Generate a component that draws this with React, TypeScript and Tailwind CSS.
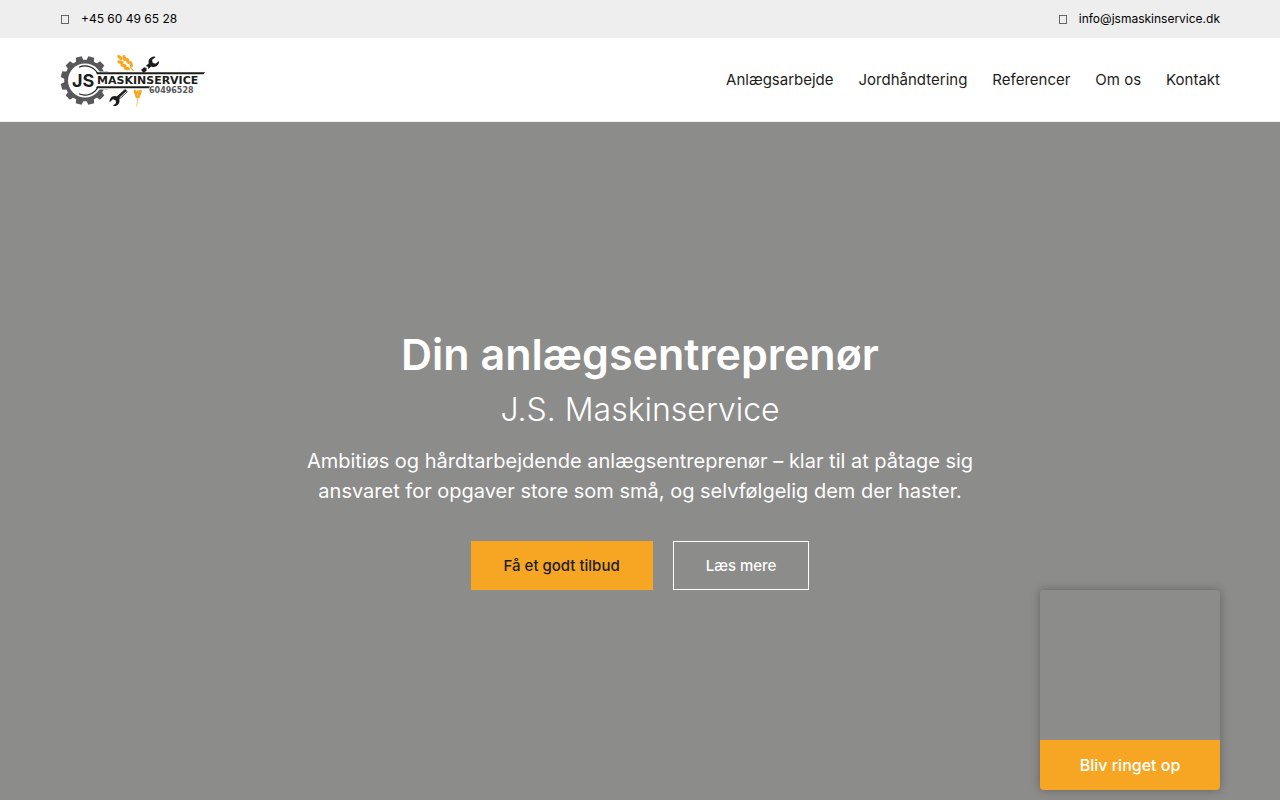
const navItems = [
  { label: "Anlægsarbejde", href: "#anlaegsarbejde" },
  { label: "Jordhåndtering", href: "#jordhaandtering" },
  { label: "Referencer", href: "#referencer" },
  { label: "Om os", href: "#om-os" },
  { label: "Kontakt", href: "#kontakt" },
];

const toothAngles = [15, 45, 75, 105, 135, 165, 195, 225, 255, 285, 315, 345];

function Wrench() {
  return (
    <path d="M-2 12V0C-4.6-1.2-5.6-3.6-5-6.2-4.7-7.6-3.8-8.8-2.6-9.5V-5L0-3.4 2.6-5V-9.5C3.8-8.8 4.7-7.6 5-6.2 5.6-3.6 4.6-1.2 2 0V12Z" />
  );
}

function Grain() {
  return (
    <g fill="#f7a823">
      <ellipse cx="0" cy="-8.5" rx="1.7" ry="3.2" />
      <ellipse cx="-2.8" cy="-5" rx="1.7" ry="3.2" transform="rotate(-32 -2.8 -5)" />
      <ellipse cx="2.8" cy="-5" rx="1.7" ry="3.2" transform="rotate(32 2.8 -5)" />
      <ellipse cx="-3.1" cy="-.5" rx="1.7" ry="3.2" transform="rotate(-32 -3.1 -.5)" />
      <ellipse cx="3.1" cy="-.5" rx="1.7" ry="3.2" transform="rotate(32 3.1 -.5)" />
      <ellipse cx="-3.1" cy="4" rx="1.7" ry="3.2" transform="rotate(-32 -3.1 4)" />
      <ellipse cx="3.1" cy="4" rx="1.7" ry="3.2" transform="rotate(32 3.1 4)" />
      <path d="M-.5 5H.5V11H-.5Z" />
    </g>
  );
}

function Logo() {
  return (
    <svg
      width="146"
      height="54"
      viewBox="60 52 146 54"
      role="img"
      aria-label="JS Maskinservice 60496528"
    >
      <g fill="#58585b">
        {toothAngles.map((angle) => (
          <path
            key={angle}
            d="M81 60.5L82 55.2H88L89 60.5Z"
            transform={`rotate(${angle} 85 79.5)`}
          />
        ))}
        <circle cx="85" cy="79.5" r="20.8" />
      </g>
      <circle cx="85" cy="79.5" r="17" fill="#fff" />
      <path d="M97 70.5H112V88.5H97Z" fill="#fff" />
      <path
        d="M79 66.2A14.5 14.5 0 0 1 98 73M98 86A14.5 14.5 0 0 1 79 92.8"
        fill="none"
        stroke="#1d1d1b"
        strokeWidth="1.2"
      />
      <path d="M96 71.3H205L203.6 73.3H97Z" fill="#1d1d1b" />
      <path d="M97 85.3H150L149 87.3H96Z" fill="#1d1d1b" />

      <g transform="translate(126 62.5) rotate(-46)">
        <Grain />
      </g>
      <g fill="#1d1d1b">
        <g transform="translate(150 64) rotate(50)">
          <path d="M-2 10V6L0 4.6 2 6V10Z" />
          <path d="M-2 4V0C-4.6-1.2-5.6-3.6-5-6.2-4.7-7.6-3.8-8.8-2.6-9.5V-5L0-3.4 2.6-5V-9.5C3.8-8.8 4.7-7.6 5-6.2 5.6-3.6 4.6-1.2 2 0V4L0 2.6Z" />
        </g>
        <g transform="translate(118 97) rotate(228) scale(.95)">
          <Wrench />
        </g>
      </g>
      <path d="M119.5 97L126.5 90.5" stroke="#fff" strokeWidth="1" />
      <g fill="#f7a823">
        <ellipse cx="135.4" cy="91.5" rx="1.6" ry="2.8" transform="rotate(-20 135.4 91.5)" />
        <ellipse cx="140" cy="91.5" rx="1.6" ry="2.8" transform="rotate(20 140 91.5)" />
        <ellipse cx="137.7" cy="91.3" rx="1.3" ry="2.4" />
        <ellipse cx="136.5" cy="95" rx="1.4" ry="2.2" transform="rotate(-20 136.5 95)" />
        <ellipse cx="138.9" cy="95" rx="1.4" ry="2.2" transform="rotate(20 138.9 95)" />
        <path d="M137.4 97H138.2L137 105.5H136.4Z" />
      </g>

      <text
        x="72"
        y="86"
        fill="#1d1d1b"
        className="font-['Inter',sans-serif] text-[18px] font-bold"
      >
        JS
      </text>
      <text
        x="97"
        y="83"
        fill="#1d1d1b"
        className="font-['DejaVu_Sans',sans-serif] text-[11px] font-bold"
      >
        MASKINSERVICE
      </text>
      <text
        x="149"
        y="92"
        fill="#58585b"
        className="font-['DejaVu_Sans',sans-serif] text-[8px] font-bold"
      >
        60496528
      </text>
    </svg>
  );
}

function TopBar() {
  return (
    <div className="flex h-[38px] items-center justify-between bg-[#eeeeee] px-[60px] text-xs text-black">
      <a href="tel:+4560496528" className="flex items-center gap-3">
        <span className="ml-px h-[9px] w-2 border border-[#666666]" />
        +45 60 49 65 28
      </a>
      <a href="mailto:info@jsmaskinservice.dk" className="flex items-center gap-3">
        <span className="h-[9px] w-2 border border-[#666666]" />
        info@jsmaskinservice.dk
      </a>
    </div>
  );
}

function Header() {
  return (
    <header className="flex h-[84px] items-center justify-between border-b border-[#eeeeee] bg-white px-[60px]">
      <a href="#">
        <Logo />
      </a>
      <nav className="flex gap-[25px] text-[15px] leading-6 text-[#1d1d1b]">
        {navItems.map((item) => (
          <a key={item.href} href={item.href}>
            {item.label}
          </a>
        ))}
      </nav>
    </header>
  );
}

function Hero() {
  return (
    <section className="flex flex-1 flex-col items-center justify-center bg-[#8c8c8a] px-5 text-center text-white">
      <h1 className="text-[43px] leading-[44px] font-semibold">
        Din anlægsentreprenør
      </h1>
      <h2 className="mt-[14px] text-[32px] leading-10 font-light">
        J.S. Maskinservice
      </h2>
      <p className="mt-4 max-w-[700px] text-xl leading-[30px]">
        Ambitiøs og hårdtarbejdende anlægsentreprenør – klar til at påtage sig
        ansvaret for opgaver store som små, og selvfølgelig dem der haster.
      </p>
      <div className="mt-[35px] flex gap-5 text-[15px] leading-[15px] font-medium">
        <a
          href="#tilbud"
          className="border border-[#f6a623] bg-[#f6a623] px-8 py-4 text-[#1d1d1b]"
        >
          Få et godt tilbud
        </a>
        <a href="#om-os" className="border border-white px-8 py-4">
          Læs mere
        </a>
      </div>
    </section>
  );
}

function CallbackWidget() {
  return (
    <button
      type="button"
      className="fixed right-[60px] bottom-[10px] flex h-[200px] w-[180px] flex-col justify-end overflow-hidden rounded bg-[#8c8c8a] shadow-[0_0_10px_rgba(0,0,0,0.3)]"
    >
      <span className="flex h-[50px] w-full items-center justify-center bg-[#f6a623] text-base font-medium text-white">
        Bliv ringet op
      </span>
    </button>
  );
}

export default function App() {
  return (
    <div className="flex min-h-screen flex-col font-['Inter',sans-serif]">
      <TopBar />
      <Header />
      <Hero />
      <CallbackWidget />
    </div>
  );
}
